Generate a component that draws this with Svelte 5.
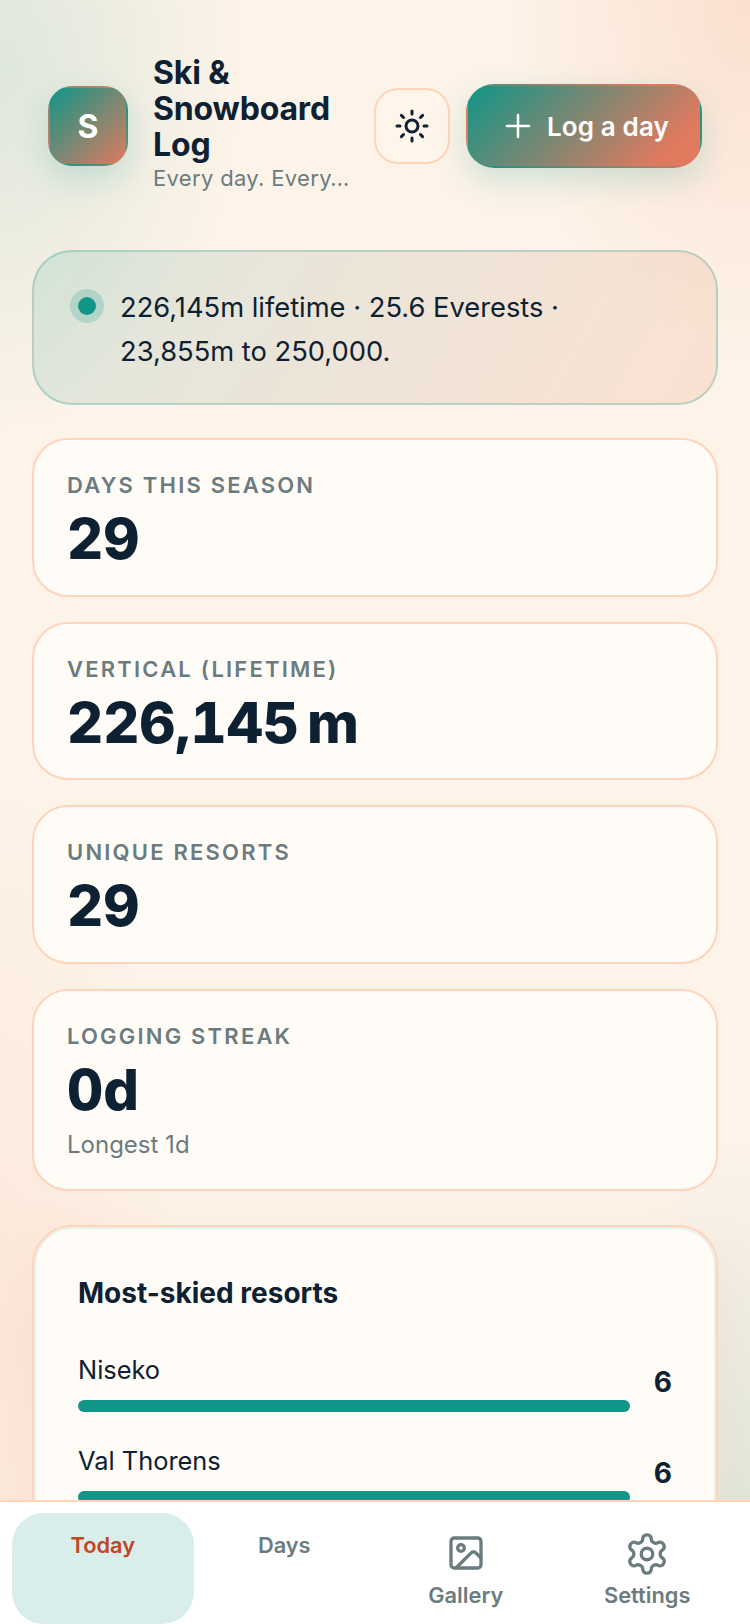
<script lang="ts">
  const stats = [
    { label: 'Days this season', value: '29' },
    { label: 'Vertical (lifetime)', value: '226,145', unit: 'm' },
    { label: 'Unique resorts', value: '29' },
    { label: 'Logging streak', value: '0d', note: 'Longest 1d' }
  ];

  const resorts = [
    { name: 'Niseko', count: 6 },
    { name: 'Val Thorens', count: 6 }
  ];
</script>

<div class="shell">
  <main class="page">
    <header class="top">
      <div class="avatar">S</div>
      <div class="brand">
        <h1>Ski &amp; Snowboard Log</h1>
        <p>Every day. Every…</p>
      </div>
      <button class="theme" aria-label="Toggle theme">
        <svg viewBox="0 0 24 24" width="36" height="36" fill="none" stroke="currentColor" stroke-width="2" stroke-linecap="round" stroke-linejoin="round">
          <circle cx="12" cy="12" r="4" />
          <path d="M12 2v2M12 20v2M4.93 4.93l1.41 1.41M17.66 17.66l1.41 1.41M2 12h2M20 12h2M6.34 17.66l-1.41 1.41M19.07 4.93l-1.41 1.41" />
        </svg>
      </button>
      <button class="log">
        <svg viewBox="0 0 24 24" width="38" height="38" fill="none" stroke="currentColor" stroke-width="1.6" stroke-linecap="round" stroke-linejoin="round">
          <path d="M5 12h14M12 5v14" />
        </svg>
        Log a day
      </button>
    </header>

    <section class="hero">
      <span class="dot"></span>
      <p>226,145m lifetime · 25.6 Everests · 23,855m to 250,000.</p>
    </section>

    {#each stats as stat}
      <section class="stat">
        <div class="stat-label">{stat.label}</div>
        <div class="stat-value">
          {stat.value}{#if stat.unit}<span class="stat-unit">{stat.unit}</span>{/if}
        </div>
        {#if stat.note}
          <div class="stat-note">{stat.note}</div>
        {/if}
      </section>
    {/each}

    <section class="resorts">
      <h2>Most-skied resorts</h2>
      <ul>
        {#each resorts as resort}
          <li>
            <div class="resort-main">
              <span class="resort-name">{resort.name}</span>
              <div class="bar"></div>
            </div>
            <span class="resort-count">{resort.count}</span>
          </li>
        {/each}
      </ul>
    </section>
  </main>

  <nav class="tabs">
    <button class="tab active"><span>Today</span></button>
    <button class="tab"><span>Days</span></button>
    <button class="tab">
      <span class="tab-icon">
        <svg viewBox="0 0 24 24" width="40" height="40" fill="none" stroke="currentColor" stroke-width="2" stroke-linecap="round" stroke-linejoin="round">
          <rect x="3" y="3" width="18" height="18" rx="2" />
          <circle cx="9" cy="9" r="2" />
          <path d="m21 15-3.086-3.086a2 2 0 0 0-2.828 0L6 21" />
        </svg>
      </span>
      <span>Gallery</span>
    </button>
    <button class="tab">
      <span class="tab-icon">
        <svg viewBox="0 0 24 24" width="46" height="46" fill="none" stroke="currentColor" stroke-width="1.75" stroke-linecap="round" stroke-linejoin="round">
          <path d="M12.22 2h-.44a2 2 0 0 0-2 2v.18a2 2 0 0 1-1 1.73l-.43.25a2 2 0 0 1-2 0l-.15-.08a2 2 0 0 0-2.73.73l-.22.38a2 2 0 0 0 .73 2.73l.15.1a2 2 0 0 1 1 1.72v.51a2 2 0 0 1-1 1.74l-.15.09a2 2 0 0 0-.73 2.73l.22.38a2 2 0 0 0 2.73.73l.15-.08a2 2 0 0 1 2 0l.43.25a2 2 0 0 1 1 1.73V20a2 2 0 0 0 2 2h.44a2 2 0 0 0 2-2v-.18a2 2 0 0 1 1-1.73l.43-.25a2 2 0 0 1 2 0l.15.08a2 2 0 0 0 2.73-.73l.22-.39a2 2 0 0 0-.73-2.73l-.15-.08a2 2 0 0 1-1-1.74v-.5a2 2 0 0 1 1-1.74l.15-.09a2 2 0 0 0 .73-2.73l-.22-.38a2 2 0 0 0-2.73-.73l-.15.08a2 2 0 0 1-2 0l-.43-.25a2 2 0 0 1-1-1.73V4a2 2 0 0 0-2-2z" />
          <circle cx="12" cy="12" r="3" />
        </svg>
      </span>
      <span>Settings</span>
    </button>
  </nav>
</div>

<style>
  :global(body) {
    margin: 0;
    font-family: Inter, 'Liberation Sans', sans-serif;
    color: #0d2132;
  }

  .shell {
    height: 1624px;
    display: flex;
    flex-direction: column;
    overflow: hidden;
    background:
      radial-gradient(ellipse 240px 360px at 0 70px, rgba(15, 150, 136, 0.13), transparent 100%),
      radial-gradient(ellipse 240px 360px at 750px 0, rgba(240, 130, 90, 0.17), transparent 100%),
      radial-gradient(ellipse 180px 560px at 0 1350px, rgba(240, 130, 90, 0.1), transparent 100%),
      radial-gradient(ellipse 180px 360px at 750px 1500px, rgba(15, 150, 136, 0.12), transparent 100%),
      #fdf3e8;
  }

  .page {
    flex: 1;
    min-height: 0;
    overflow: hidden;
    padding: 55px 32px 0;
  }

  .top {
    display: flex;
    align-items: center;
    gap: 16px;
    height: 142px;
    padding: 0 16px;
    margin-bottom: 53px;
  }

  .avatar {
    flex: none;
    box-sizing: border-box;
    width: 80px;
    height: 80px;
    display: grid;
    place-items: center;
    margin-right: 9px;
    border: 2px solid transparent;
    border-radius: 24px;
    background: linear-gradient(135deg, #0f9688, #e07a5f);
    box-shadow: 0 12px 32px rgba(15, 150, 136, 0.2);
    color: #fff;
    font-size: 32px;
    font-weight: 700;
  }

  .brand {
    flex: 1;
    min-width: 0;
    padding-bottom: 6px;
  }

  .brand h1 {
    margin: 0;
    font-size: 32px;
    line-height: 36px;
    font-weight: 700;
    letter-spacing: -0.005em;
  }

  .brand p {
    margin: 2px 0 0;
    font-size: 22px;
    line-height: 26px;
    letter-spacing: 0.015em;
    color: #6b7c80;
    white-space: nowrap;
  }

  .theme {
    flex: none;
    box-sizing: border-box;
    width: 76px;
    height: 76px;
    display: grid;
    place-items: center;
    padding: 0;
    border: 2px solid #ffd4bb;
    border-radius: 24px;
    background: #fff5ea;
    color: #0d2132;
  }

  .log {
    flex: none;
    box-sizing: border-box;
    width: 236px;
    height: 84px;
    display: flex;
    align-items: center;
    justify-content: center;
    gap: 10px;
    padding: 0;
    border: 2px solid transparent;
    border-radius: 28px;
    background: linear-gradient(135deg, #0f9688, #e07a5f 85%);
    box-shadow: 0 12px 32px rgba(15, 150, 136, 0.2);
    color: #fff;
    font-family: inherit;
    font-size: 26px;
    font-weight: 600;
    letter-spacing: 0.005em;
  }

  .hero {
    display: flex;
    gap: 16px;
    box-sizing: border-box;
    height: 155px;
    padding: 34px 32px 0 36px;
    margin-bottom: 33px;
    border: 2px solid rgba(15, 150, 136, 0.25);
    border-radius: 40px;
    background: linear-gradient(120deg, rgba(15, 150, 136, 0.12), rgba(240, 130, 90, 0.15));
  }

  .dot {
    flex: none;
    box-sizing: border-box;
    width: 34px;
    height: 34px;
    margin-top: 3px;
    border: 8px solid rgba(15, 150, 136, 0.2);
    border-radius: 50%;
    background: #0f9688;
    background-clip: padding-box;
  }

  .hero p {
    margin: 0;
    max-width: 480px;
    font-size: 27.3px;
    line-height: 44px;
  }

  .stat {
    margin-bottom: 25px;
    padding: 32px 33px 23.67px;
    border: 2px solid #ffd4bb;
    border-radius: 36px;
    background: #fffbf6;
  }

  .stat:nth-of-type(5) {
    margin-bottom: 34px;
  }

  .stat-label {
    font-size: 22px;
    line-height: 26px;
    font-weight: 600;
    letter-spacing: 0.1em;
    text-transform: uppercase;
    color: #6b7c80;
  }

  .stat-value {
    margin-top: 9px;
    font-size: 56px;
    line-height: 64px;
    font-weight: 800;
    font-variant-numeric: tabular-nums;
  }

  .stat-unit {
    margin-left: 8px;
  }

  .stat-note {
    margin: 7px 0 4.33px;
    font-size: 24px;
    line-height: 32px;
    color: #6b7c80;
  }

  .resorts {
    box-sizing: border-box;
    height: 400px;
    padding: 48px 44px;
    border: 2px solid #ffd4bb;
    border-radius: 40px;
    background: #fffbf6;
    box-shadow: inset 0 0 0 2px rgba(15, 150, 136, 0.1), 0 20px 60px rgba(240, 130, 90, 0.12);
  }

  .resorts h2 {
    margin: 0 0 41px;
    font-size: 28px;
    line-height: 36px;
    font-weight: 700;
  }

  .resorts ul {
    list-style: none;
    margin: 0;
    padding: 0;
    display: grid;
    gap: 31px;
  }

  .resorts li {
    display: flex;
    align-items: center;
    gap: 24px;
  }

  .resort-main {
    flex: 1;
  }

  .resort-name {
    display: block;
    margin-bottom: 12px;
    font-size: 25.4px;
    line-height: 36px;
  }

  .bar {
    height: 12px;
    border-radius: 6px;
    background: #0f9688;
  }

  .resort-count {
    font-size: 28px;
    font-weight: 700;
  }

  .tabs {
    flex: none;
    box-sizing: border-box;
    height: 124px;
    display: grid;
    grid-template-columns: repeat(4, 1fr);
    padding: 11px 12px 0;
    border-top: 2px solid #ffd4bb;
    background: #fff;
  }

  .tab {
    display: flex;
    flex-direction: column;
    align-items: center;
    justify-content: flex-start;
    padding: 18px 0 0;
    border: 0;
    border-radius: 32px;
    background: none;
    color: #6b7c80;
    font-family: inherit;
    font-size: 21.8px;
    line-height: 28px;
    font-weight: 600;
  }

  .tab-icon {
    height: 44px;
    margin-bottom: 6px;
    display: grid;
    place-items: center;
  }

  .tab.active {
    background: #d9eeeb;
    color: #c2451f;
  }
</style>
